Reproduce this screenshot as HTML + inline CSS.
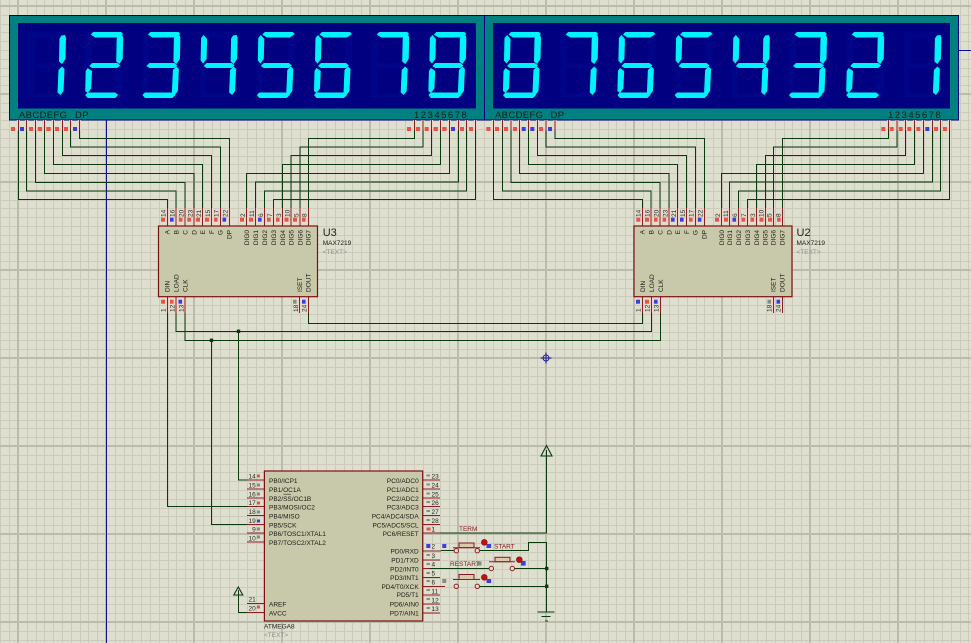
<!DOCTYPE html>
<html><head><meta charset="utf-8">
<style>
html,body{margin:0;padding:0;background:#dfdfd0;width:971px;height:643px;overflow:hidden}
svg{display:block;width:971px;height:643px;overflow:hidden}
text{font-family:"Liberation Sans",sans-serif}
.t{font-size:6.5px;fill:#1c1c16}
.n{font-size:6.5px;fill:#2a2a22}
.l{font-size:9.5px;fill:#0c1c18;letter-spacing:.35px}
.d{font-size:9.5px;fill:#0c1c18;letter-spacing:1.5px}
.g{font-size:6.5px;fill:#8e8e84}
.r{font-size:6.5px;fill:#7a1a1a}
</style></head><body>
<svg width="971" height="643" viewBox="0 0 971 643" xmlns="http://www.w3.org/2000/svg">
<defs>
<path id="cols" d="M9.5 0V643M18.5 0V643M26.5 0V643M35.5 0V643M44.5 0V643M53.5 0V643M62.5 0V643M70.5 0V643M79.5 0V643" stroke="#cbcbbb" stroke-width="1" fill="none"/>
<path id="rows" d="M0 9.5H971M0 18.5H971M0 26.5H971M0 35.5H971M0 44.5H971M0 53.5H971M0 62.5H971M0 70.5H971M0 79.5H971" stroke="#cbcbbb" stroke-width="1" fill="none"/>
<polygon id="a" points="33.5,34.5 36,32 64,32 66,34 61,37.5 38,37.5"/>
<polygon id="b" points="59.5,38.5 61.5,35.5 65,35 66,37.5 65.5,59 62,64 59,61.5"/>
<polygon id="c" points="58.5,70 62,66.5 64.5,69 63.5,91 60.5,95 57.5,92.5"/>
<polygon id="e2" points="28,95 30.5,92.5 58,92.5 61,95 58,98 30.5,98"/>
<polygon id="e" points="28.5,71 30.5,68 34.8,71 34,88.5 30.5,93 28,91"/>
<polygon id="f" points="29.5,38 32,35 35.5,39 35,59 31.5,63.5 29,60.5"/>
<polygon id="m" points="32,66 35,63 60,63 63,65.5 60,68 35,68"/>
<g id="d0"><rect x="28" y="32" width="38" height="66" fill="#000487"/><rect x="35" y="38" width="24" height="25" fill="#000080"/><rect x="34" y="68" width="24" height="25" fill="#000080"/></g>
<g id="d1" fill="#00f4ff"><use href="#b"/><use href="#c"/></g>
<g id="d2" fill="#00f4ff"><use href="#a"/><use href="#b"/><use href="#m"/><use href="#e"/><use href="#e2"/></g>
<g id="d3" fill="#00f4ff"><use href="#a"/><use href="#b"/><use href="#m"/><use href="#c"/><use href="#e2"/></g>
<g id="d4" fill="#00f4ff"><use href="#f"/><use href="#b"/><use href="#m"/><use href="#c"/></g>
<g id="d5" fill="#00f4ff"><use href="#a"/><use href="#f"/><use href="#m"/><use href="#c"/><use href="#e2"/></g>
<g id="d6" fill="#00f4ff"><use href="#a"/><use href="#f"/><use href="#m"/><use href="#c"/><use href="#e"/><use href="#e2"/></g>
<g id="d7" fill="#00f4ff"><use href="#a"/><use href="#b"/><use href="#c"/></g>
<g id="d8" fill="#00f4ff"><use href="#a"/><use href="#b"/><use href="#c"/><use href="#e"/><use href="#e2"/><use href="#f"/><use href="#m"/></g>
</defs>

<rect width="971" height="643" fill="#dfdfd0"/>
<!-- grid -->
<path d="M.5 0V643M9.5 0V643M906.5 0V643M915.5 0V643M924.5 0V643M933.5 0V643M942.5 0V643M951.5 0V643M960.5 0V643M968.5 0V643M0 631.5H971M0 640.5H971" stroke="#cbcbbb" stroke-width="1" fill="none"/>
<use href="#cols" x="18"/><use href="#cols" x="106"/><use href="#cols" x="194"/><use href="#cols" x="282"/><use href="#cols" x="370"/><use href="#cols" x="458"/><use href="#cols" x="546"/><use href="#cols" x="634"/><use href="#cols" x="722"/><use href="#cols" x="810"/>
<use href="#rows" y="6"/><use href="#rows" y="94"/><use href="#rows" y="182"/><use href="#rows" y="270"/><use href="#rows" y="358"/><use href="#rows" y="446"/><use href="#rows" y="534"/>
<path d="M18 0V643M106 0V643M194 0V643M282 0V643M370 0V643M458 0V643M546 0V643M634 0V643M722 0V643M810 0V643M898 0V643M0 6H971M0 94H971M0 182H971M0 270H971M0 358H971M0 446H971M0 534H971M0 622H971" stroke="#bcbcac" stroke-width="2" fill="none"/>

<!-- origin lines -->
<path d="M106.5 120V643M958 50.5H971" stroke="#10108c" stroke-width="1" fill="none"/>
<g stroke="#2020a0" fill="none" stroke-width="1"><circle cx="546" cy="358" r="3"/><path d="M540.5 358H551.5M546 352.5V363.5"/></g>

<!-- displays -->
<rect x="9.5" y="15.5" width="475" height="104.5" fill="#008080" stroke="#000080"/>
<rect x="484.5" y="15.5" width="474" height="104.5" fill="#008080" stroke="#000080"/>
<rect x="18" y="23" width="458" height="85.5" fill="#000080"/>
<rect x="493" y="23" width="457" height="85.5" fill="#000080"/>

<use href="#d0"/><use href="#d0" x="57.2"/><use href="#d0" x="114.4"/><use href="#d0" x="171.6"/><use href="#d0" x="228.8"/><use href="#d0" x="286"/><use href="#d0" x="343.2"/><use href="#d0" x="400.4"/>
<use href="#d0" x="475"/><use href="#d0" x="532.2"/><use href="#d0" x="589.4"/><use href="#d0" x="646.6"/><use href="#d0" x="703.8"/><use href="#d0" x="761"/><use href="#d0" x="818.2"/><use href="#d0" x="875.4"/>

<use href="#d1"/><use href="#d2" x="57.2"/><use href="#d3" x="114.4"/><use href="#d4" x="171.6"/><use href="#d5" x="228.8"/><use href="#d6" x="286"/><use href="#d7" x="343.2"/><use href="#d8" x="400.4"/>
<use href="#d8" x="475"/><use href="#d7" x="532.2"/><use href="#d6" x="589.4"/><use href="#d5" x="646.6"/><use href="#d4" x="703.8"/><use href="#d3" x="761"/><use href="#d2" x="818.2"/><use href="#d1" x="875.4"/>

<text class="l" x="19" y="118">ABCDEFG</text><text class="l" x="75" y="118">DP</text>
<text class="d" x="414" y="118">12345678</text>
<text class="l" x="495" y="118">ABCDEFG</text><text class="l" x="550.5" y="118">DP</text>
<text class="d" x="888" y="118">12345678</text>

<!-- pale pin fringes -->
<g stroke="#eed3c8" stroke-width="3" fill="none">
<path d="M18.3 120V131M26.7 120V131M35.7 120V131M44.7 120V131M53.3 120V131M62.3 120V131M70.7 120V131M79.3 120V131M414.7 120V131M423 120V131M431.7 120V131M440.7 120V131M449.3 120V131M458.3 120V131M466.7 120V131M475.3 120V131"/>
<path d="M493.3 120V131M502.3 120V131M511 120V131M519.7 120V131M528.7 120V131M537.7 120V131M546 120V131M555 120V131M888.7 120V131M897 120V131M905.7 120V131M914.7 120V131M923.3 120V131M932.3 120V131M940.7 120V131M949.3 120V131"/>
<path d="M167.3 208V226M176 208V226M185 208V226M194 208V226M202.7 208V226M211.7 208V226M220.3 208V226M229.3 208V226M246.7 208V226M255.7 208V226M264.7 208V226M273.7 208V226M282.7 208V226M291 208V226M300 208V226M308.3 208V226"/>
<path d="M642.3 208V226M651 208V226M660 208V226M669 208V226M677.7 208V226M686.7 208V226M695.3 208V226M704.3 208V226M721.7 208V226M729.7 208V226M738.7 208V226M747.7 208V226M756.7 208V226M765.3 208V226M773.3 208V226M782.3 208V226"/>
<path d="M167.3 297V313M176 297V313M185 297V313M299.7 297V313M308.3 297V313M642.7 297V313M651.7 297V313M660.7 297V313M773.3 297V313M782.3 297V313"/>
</g>

<!-- pins (dark red) -->
<g stroke="#8c2020" stroke-width="1" fill="none" shape-rendering="crispEdges">
<path d="M18.3 120V130M26.7 120V130M35.7 120V130M44.7 120V130M53.3 120V130M62.3 120V130M70.7 120V130M79.3 120V130M414.7 120V130M423 120V130M431.7 120V130M440.7 120V130M449.3 120V130M458.3 120V130M466.7 120V130M475.3 120V130"/>
<path d="M493.3 120V130M502.3 120V130M511 120V130M519.7 120V130M528.7 120V130M537.7 120V130M546 120V130M555 120V130M888.7 120V130M897 120V130M905.7 120V130M914.7 120V130M923.3 120V130M932.3 120V130M940.7 120V130M949.3 120V130"/>
<path d="M167.3 208V226M176 208V226M185 208V226M194 208V226M202.7 208V226M211.7 208V226M220.3 208V226M229.3 208V226M246.7 208V226M255.7 208V226M264.7 208V226M273.7 208V226M282.7 208V226M291 208V226M300 208V226M308.3 208V226"/>
<path d="M642.3 208V226M651 208V226M660 208V226M669 208V226M677.7 208V226M686.7 208V226M695.3 208V226M704.3 208V226M721.7 208V226M729.7 208V226M738.7 208V226M747.7 208V226M756.7 208V226M765.3 208V226M773.3 208V226M782.3 208V226"/>
<path d="M167.3 297V313M176 297V313M185 297V313M299.7 297V313M308.3 297V313M642.7 297V313M651.7 297V313M660.7 297V313M773.3 297V313M782.3 297V313"/>
<path d="M247 480H264M247 489H264M247 498H264M247 506.7H264M247 515.7H264M247 524.3H264M247 533H264M247 542H264M247 603.3H264M247 612.3H264"/>
<path d="M423 480H440M423 489H440M423 498H440M423 506.7H440M423 515.7H440M423 524.3H440M423 533H440M423 551H441M423 560H440M423 568.5H440M423 577.5H440M423 586.3H445M423 595H440M423 604H440M423 613H440"/>
</g>

<!-- wires -->
<g stroke="#0a3a0c" stroke-width="1" fill="none" shape-rendering="crispEdges">
<path d="M79.3 130V138.3H229.3V208M70.7 130V147H220.3V208M62.3 130V155.3H211.7V208M53.3 130V164.3H202.7V208M44.7 130V173.3H194V208M35.7 130V182.3H185V208M26.7 130V191H176V208M18.3 130V199.3H167.3V208"/>
<path d="M414.7 130V138.3H308.3V208M423 130V147H300V208M431.7 130V155.3H291V208M440.7 130V164.3H282.7V208M449.3 130V173.3H246.7V208M458.3 130V182H255.7V208M466.7 130V191H264.7V208M475.3 130V199.3H273.7V208"/>
<path d="M555 130V138.3H704.3V208M546 130V147H695.3V208M537.7 130V155.3H686.7V208M528.7 130V164.3H677.7V208M519.7 130V173.3H669V208M511 130V182.3H660V208M502.3 130V191H651V208M493.3 130V199.3H642.3V208"/>
<path d="M888.7 130V138.3H782.3V208M897 130V147H773.3V208M905.7 130V155.3H765.3V208M914.7 130V164.3H756.7V208M923.3 130V173.3H721.7V208M932.3 130V182H729.7V208M940.7 130V191H738.7V208M949.3 130V199.3H747.7V208"/>
<path d="M308.3 313V323.3H642.7V313M176 313V331.3H651.7V313M185 313V340.3H660.7V313"/>
<path d="M167.3 313V506.7H247M238.5 331.3V480H247M211.5 340.3V524.3H247"/>
<path d="M238.3 590V612.3H247"/>
<path d="M440 533H546.5V450"/>
<path d="M441 550.7H456M477.3 550.7H528.3V542.3H546.5V612M430 568.5H491.3M512.3 568.5H546.5M477.3 586.3H546.5"/>
<path d="M537.3 612H554.7M541.7 616.5H550.7M545 621H548"/>
</g>
<g stroke="#0a3a0c" stroke-width="1.1" fill="none">
<path d="M546.5 445.5L541 456H552Z"/>
<path d="M238.3 587L233.8 595H242.8Z"/>
</g>
<g fill="#0a3a0c"><rect x="236.8" y="329.6" width="3.4" height="3.4"/><rect x="209.8" y="338.6" width="3.4" height="3.4"/><rect x="545" y="566.8" width="3.4" height="3.4"/><rect x="545" y="584.6" width="3.4" height="3.4"/></g>

<!-- chips -->
<rect x="158.5" y="226" width="159" height="70.7" fill="#c8c8aa" stroke="#7c1010" stroke-width="1.2"/>
<rect x="634" y="226" width="158" height="70.7" fill="#c8c8aa" stroke="#7c1010" stroke-width="1.2"/>
<rect x="264.4" y="471" width="158.3" height="150" fill="#c8c8aa" stroke="#7c1010" stroke-width="1.2"/>

<!-- display pin squares -->
<g fill="#e85548">
<rect x="11" y="127" width="4" height="4"/><rect x="29" y="127" width="4" height="4"/><rect x="37.7" y="127" width="4.4" height="4"/><rect x="46.3" y="127" width="4.4" height="4"/><rect x="55" y="127" width="4" height="4"/><rect x="64" y="127" width="4" height="4"/>
<rect x="407" y="127" width="4" height="4"/><rect x="416" y="127" width="4" height="4"/><rect x="424.7" y="127" width="4" height="4"/><rect x="433.5" y="127" width="4.4" height="4"/><rect x="442.2" y="127" width="4.4" height="4"/><rect x="460" y="127" width="4" height="4"/><rect x="469" y="127" width="4" height="4"/>
<rect x="486.3" y="127" width="4.2" height="4"/><rect x="495" y="127" width="4" height="4"/><rect x="504" y="127" width="4" height="4"/><rect x="513" y="127" width="4" height="4"/><rect x="539" y="127" width="4" height="4"/>
<rect x="881.3" y="127" width="4" height="4"/><rect x="889.7" y="127" width="4" height="4"/><rect x="898.7" y="127" width="4" height="4"/><rect x="907.3" y="127" width="4" height="4"/><rect x="916.3" y="127" width="4" height="4"/><rect x="934" y="127" width="4" height="4"/><rect x="943" y="127" width="4" height="4"/>
<!-- U3 top -->
<rect x="161" y="217.7" width="4" height="4"/><rect x="178.8" y="217.7" width="3.6" height="4"/><rect x="187.3" y="217.7" width="3.6" height="4"/><rect x="196" y="217.7" width="4" height="4"/><rect x="205" y="217.7" width="4" height="4"/><rect x="214" y="217.7" width="3.6" height="4"/>
<rect x="240" y="217.7" width="4" height="4"/><rect x="249" y="217.7" width="4" height="4"/><rect x="267" y="217.7" width="3.6" height="4"/><rect x="276" y="217.7" width="3.6" height="4"/><rect x="284.5" y="217.7" width="4" height="4"/><rect x="293" y="217.7" width="4" height="4"/><rect x="302" y="217.7" width="3.6" height="4"/>
<rect x="161" y="299.7" width="4" height="4"/><rect x="170" y="299.7" width="3.6" height="4"/>
<!-- U2 top -->
<rect x="636.3" y="217.7" width="4" height="4"/><rect x="645" y="217.7" width="4" height="4"/><rect x="654" y="217.7" width="3.6" height="4"/><rect x="662.6" y="217.7" width="3.6" height="4"/><rect x="689" y="217.7" width="3.6" height="4"/>
<rect x="715" y="217.7" width="4" height="4"/><rect x="724" y="217.7" width="4" height="4"/><rect x="741.5" y="217.7" width="3.6" height="4"/><rect x="750.5" y="217.7" width="3.6" height="4"/><rect x="759.5" y="217.7" width="4" height="4"/><rect x="768" y="217.7" width="4" height="4"/><rect x="777" y="217.7" width="3.6" height="4"/>
<rect x="645" y="299.7" width="4" height="4"/>
<!-- AVR -->
<rect x="257" y="474.5" width="3" height="3"/><rect x="257" y="501.5" width="3" height="3"/><rect x="257" y="605.5" width="3" height="3"/><rect x="426.5" y="527.5" width="4" height="3"/>
</g>
<g fill="#3c3ce0">
<rect x="20" y="127" width="4" height="4"/><rect x="73" y="127" width="4" height="4"/><rect x="451" y="127" width="4" height="4"/>
<rect x="521.7" y="127" width="4" height="4"/><rect x="530.3" y="127" width="4" height="4"/><rect x="548" y="127" width="4" height="4"/><rect x="925.3" y="127" width="4" height="4"/>
<rect x="170" y="217.7" width="3.6" height="4"/><rect x="222.5" y="217.7" width="3.6" height="4"/><rect x="258" y="217.7" width="3.6" height="4"/>
<rect x="178.5" y="299.7" width="3.6" height="4"/><rect x="302" y="299.7" width="3.6" height="4"/>
<rect x="671" y="217.7" width="3.6" height="4"/><rect x="680" y="217.7" width="3.6" height="4"/><rect x="697.8" y="217.7" width="3.6" height="4"/><rect x="732.5" y="217.7" width="3.6" height="4"/>
<rect x="636" y="299.7" width="4" height="4"/><rect x="654" y="299.7" width="3.6" height="4"/><rect x="776.5" y="299.7" width="3.6" height="4"/>
<rect x="257" y="519.5" width="3" height="3"/><rect x="426.3" y="544" width="4" height="4"/><rect x="442.3" y="544" width="4" height="4"/>
<rect x="486.5" y="544" width="4.6" height="4"/><rect x="521" y="561" width="4.6" height="4.6"/><rect x="486.5" y="579" width="4.6" height="4"/>
</g>
<g fill="#8a8a80">
<rect x="293" y="299.7" width="3.6" height="4"/><rect x="767.5" y="299.7" width="3.6" height="4"/>
<rect x="257" y="483.5" width="3" height="3"/><rect x="257" y="492.5" width="3" height="3"/><rect x="257" y="510.5" width="3" height="3"/><rect x="257" y="527.5" width="3" height="3"/><rect x="257" y="535.5" width="3" height="3"/>
<rect x="426.5" y="474.5" width="3.4" height="2"/><rect x="426.5" y="483.5" width="3.4" height="2"/><rect x="426.5" y="492.5" width="3.4" height="2"/><rect x="426.5" y="501" width="3.4" height="2"/><rect x="426.5" y="510" width="3.4" height="2"/><rect x="426.5" y="519" width="3.4" height="2"/>
<rect x="426.5" y="554" width="3.4" height="2"/><rect x="426.5" y="563" width="3.4" height="2"/><rect x="426.5" y="572" width="3.4" height="2"/><rect x="426.5" y="580" width="3.4" height="2"/><rect x="426.5" y="589" width="3.4" height="2"/><rect x="426.5" y="598" width="3.4" height="2"/><rect x="426.5" y="607" width="3.4" height="2"/>
<rect x="477.5" y="561.5" width="4" height="4"/><rect x="442.3" y="579" width="4" height="4"/>
</g>

<!-- U3 text -->
<g class="t">
<text class="t" transform="translate(169.6,230) rotate(-90)" text-anchor="end">A</text>
<text class="t" transform="translate(178.3,230) rotate(-90)" text-anchor="end">B</text>
<text class="t" transform="translate(187.3,230) rotate(-90)" text-anchor="end">C</text>
<text class="t" transform="translate(196.3,230) rotate(-90)" text-anchor="end">D</text>
<text class="t" transform="translate(205,230) rotate(-90)" text-anchor="end">E</text>
<text class="t" transform="translate(214,230) rotate(-90)" text-anchor="end">F</text>
<text class="t" transform="translate(222.6,230) rotate(-90)" text-anchor="end">G</text>
<text class="t" transform="translate(231.6,230) rotate(-90)" text-anchor="end">DP</text>
<text class="t" transform="translate(249,230) rotate(-90)" text-anchor="end">DIG0</text>
<text class="t" transform="translate(258,230) rotate(-90)" text-anchor="end">DIG1</text>
<text class="t" transform="translate(267,230) rotate(-90)" text-anchor="end">DIG2</text>
<text class="t" transform="translate(276,230) rotate(-90)" text-anchor="end">DIG3</text>
<text class="t" transform="translate(285,230) rotate(-90)" text-anchor="end">DIG4</text>
<text class="t" transform="translate(293.3,230) rotate(-90)" text-anchor="end">DIG5</text>
<text class="t" transform="translate(302.3,230) rotate(-90)" text-anchor="end">DIG6</text>
<text class="t" transform="translate(310.6,230) rotate(-90)" text-anchor="end">DIG7</text>
<text class="t" transform="translate(169.6,292) rotate(-90)">DIN</text>
<text class="t" transform="translate(178.3,292) rotate(-90)">LOAD</text>
<text class="t" transform="translate(187.3,292) rotate(-90)">CLK</text>
<text class="t" transform="translate(302,292) rotate(-90)">ISET</text>
<text class="t" transform="translate(310.6,292) rotate(-90)">DOUT</text>
<text class="n" transform="translate(165.6,217) rotate(-90)">14</text>
<text class="n" transform="translate(174.3,217) rotate(-90)">16</text>
<text class="n" transform="translate(183.3,217) rotate(-90)">20</text>
<text class="n" transform="translate(192.3,217) rotate(-90)">23</text>
<text class="n" transform="translate(201,217) rotate(-90)">21</text>
<text class="n" transform="translate(210,217) rotate(-90)">15</text>
<text class="n" transform="translate(218.6,217) rotate(-90)">17</text>
<text class="n" transform="translate(227.6,217) rotate(-90)">22</text>
<text class="n" transform="translate(245,217) rotate(-90)">2</text>
<text class="n" transform="translate(254,217) rotate(-90)">11</text>
<text class="n" transform="translate(263,217) rotate(-90)">6</text>
<text class="n" transform="translate(272,217) rotate(-90)">7</text>
<text class="n" transform="translate(281,217) rotate(-90)">3</text>
<text class="n" transform="translate(289.3,217) rotate(-90)">10</text>
<text class="n" transform="translate(298.3,217) rotate(-90)">5</text>
<text class="n" transform="translate(306.6,217) rotate(-90)">8</text>
<text class="n" transform="translate(165.6,312) rotate(-90)">1</text>
<text class="n" transform="translate(174.3,312) rotate(-90)">12</text>
<text class="n" transform="translate(183.3,312) rotate(-90)">13</text>
<text class="n" transform="translate(297.8,312) rotate(-90)">18</text>
<text class="n" transform="translate(306.6,312) rotate(-90)">24</text>
</g>
<text x="322.7" y="236" style="font-size:11px;fill:#22221c">U3</text>
<text class="t" x="322.7" y="245">MAX7219</text>
<text class="g" x="322.7" y="254">&lt;TEXT&gt;</text>

<!-- U2 text -->
<g class="t">
<text class="t" transform="translate(644.6,230) rotate(-90)" text-anchor="end">A</text>
<text class="t" transform="translate(653.3,230) rotate(-90)" text-anchor="end">B</text>
<text class="t" transform="translate(662.3,230) rotate(-90)" text-anchor="end">C</text>
<text class="t" transform="translate(671.3,230) rotate(-90)" text-anchor="end">D</text>
<text class="t" transform="translate(680,230) rotate(-90)" text-anchor="end">E</text>
<text class="t" transform="translate(689,230) rotate(-90)" text-anchor="end">F</text>
<text class="t" transform="translate(697.6,230) rotate(-90)" text-anchor="end">G</text>
<text class="t" transform="translate(706.6,230) rotate(-90)" text-anchor="end">DP</text>
<text class="t" transform="translate(724,230) rotate(-90)" text-anchor="end">DIG0</text>
<text class="t" transform="translate(732,230) rotate(-90)" text-anchor="end">DIG1</text>
<text class="t" transform="translate(741,230) rotate(-90)" text-anchor="end">DIG2</text>
<text class="t" transform="translate(750,230) rotate(-90)" text-anchor="end">DIG3</text>
<text class="t" transform="translate(759,230) rotate(-90)" text-anchor="end">DIG4</text>
<text class="t" transform="translate(767.6,230) rotate(-90)" text-anchor="end">DIG5</text>
<text class="t" transform="translate(775.6,230) rotate(-90)" text-anchor="end">DIG6</text>
<text class="t" transform="translate(784.6,230) rotate(-90)" text-anchor="end">DIG7</text>
<text class="t" transform="translate(645,292) rotate(-90)">DIN</text>
<text class="t" transform="translate(654,292) rotate(-90)">LOAD</text>
<text class="t" transform="translate(663,292) rotate(-90)">CLK</text>
<text class="t" transform="translate(775.6,292) rotate(-90)">ISET</text>
<text class="t" transform="translate(784.6,292) rotate(-90)">DOUT</text>
<text class="n" transform="translate(640.6,217) rotate(-90)">14</text>
<text class="n" transform="translate(649.3,217) rotate(-90)">16</text>
<text class="n" transform="translate(658.3,217) rotate(-90)">20</text>
<text class="n" transform="translate(667.3,217) rotate(-90)">23</text>
<text class="n" transform="translate(676,217) rotate(-90)">21</text>
<text class="n" transform="translate(685,217) rotate(-90)">15</text>
<text class="n" transform="translate(693.6,217) rotate(-90)">17</text>
<text class="n" transform="translate(702.6,217) rotate(-90)">22</text>
<text class="n" transform="translate(720,217) rotate(-90)">2</text>
<text class="n" transform="translate(728,217) rotate(-90)">11</text>
<text class="n" transform="translate(737,217) rotate(-90)">6</text>
<text class="n" transform="translate(746,217) rotate(-90)">7</text>
<text class="n" transform="translate(755,217) rotate(-90)">3</text>
<text class="n" transform="translate(763.6,217) rotate(-90)">10</text>
<text class="n" transform="translate(771.6,217) rotate(-90)">5</text>
<text class="n" transform="translate(780.6,217) rotate(-90)">8</text>
<text class="n" transform="translate(640.6,312) rotate(-90)">1</text>
<text class="n" transform="translate(649.3,312) rotate(-90)">12</text>
<text class="n" transform="translate(658.3,312) rotate(-90)">13</text>
<text class="n" transform="translate(771.6,312) rotate(-90)">18</text>
<text class="n" transform="translate(780.6,312) rotate(-90)">24</text>
</g>
<text x="796.5" y="236" style="font-size:11px;fill:#22221c">U2</text>
<text class="t" x="796.5" y="245">MAX7219</text>
<text class="g" x="796.5" y="254">&lt;TEXT&gt;</text>

<!-- AVR labels -->
<g class="t">
<text class="t" x="269" y="483">PB0/ICP1</text>
<text class="t" x="269" y="492">PB1/OC1A</text>
<text class="t" x="269" y="501">PB2/SS/OC1B</text>
<text class="t" x="269" y="509.7">PB3/MOSI/OC2</text>
<text class="t" x="269" y="518.7">PB4/MISO</text>
<text class="t" x="269" y="527.3">PB5/SCK</text>
<text class="t" x="269" y="536">PB6/TOSC1/XTAL1</text>
<text class="t" x="269" y="545">PB7/TOSC2/XTAL2</text>
<text class="t" x="269" y="606.3">AREF</text>
<text class="t" x="269" y="615.3">AVCC</text>
</g>
<path d="M283.5 494.2H291" stroke="#2a2a22" stroke-width=".6"/>
<g class="t" text-anchor="end">
<text class="t" x="418.7" y="483">PC0/ADC0</text>
<text class="t" x="418.7" y="492">PC1/ADC1</text>
<text class="t" x="418.7" y="501">PC2/ADC2</text>
<text class="t" x="418.7" y="509.7">PC3/ADC3</text>
<text class="t" x="418.7" y="518.7">PC4/ADC4/SDA</text>
<text class="t" x="418.7" y="527.3">PC5/ADC5/SCL</text>
<text class="t" x="418.7" y="536">PC6/RESET</text>
<text class="t" x="418.7" y="553.5">PD0/RXD</text>
<text class="t" x="418.7" y="562.3">PD1/TXD</text>
<text class="t" x="418.7" y="571.3">PD2/INT0</text>
<text class="t" x="418.7" y="580">PD3/INT1</text>
<text class="t" x="418.7" y="589">PD4/T0/XCK</text>
<text class="t" x="418.7" y="597">PD5/T1</text>
<text class="t" x="418.7" y="606.3">PD6/AIN0</text>
<text class="t" x="418.7" y="615.3">PD7/AIN1</text>
</g>
<g class="n">
<text class="n" x="255.7" y="478.7" text-anchor="end">14</text>
<text class="n" x="255.7" y="487.5" text-anchor="end">15</text>
<text class="n" x="255.7" y="496.5" text-anchor="end">16</text>
<text class="n" x="255.7" y="505" text-anchor="end">17</text>
<text class="n" x="255.7" y="514" text-anchor="end">18</text>
<text class="n" x="255.7" y="523" text-anchor="end">19</text>
<text class="n" x="255.7" y="531.7" text-anchor="end">9</text>
<text class="n" x="255.7" y="540.5" text-anchor="end">10</text>
<text class="n" x="255.7" y="601.5" text-anchor="end">21</text>
<text class="n" x="255.7" y="610.5" text-anchor="end">20</text>
<text class="n" x="431.5" y="478.7">23</text>
<text class="n" x="431.5" y="487.5">24</text>
<text class="n" x="431.5" y="496.5">25</text>
<text class="n" x="431.5" y="505">26</text>
<text class="n" x="431.5" y="514">27</text>
<text class="n" x="431.5" y="523">28</text>
<text class="n" x="431.5" y="531.7">1</text>
<text class="n" x="431.5" y="548.5">2</text>
<text class="n" x="431.5" y="558">3</text>
<text class="n" x="431.5" y="566.5">4</text>
<text class="n" x="431.5" y="575.5">5</text>
<text class="n" x="431.5" y="584.5">6</text>
<text class="n" x="431.5" y="593.3">11</text>
<text class="n" x="431.5" y="602.3">12</text>
<text class="n" x="431.5" y="611">13</text>
</g>
<text class="t" x="264" y="628.5">ATMEGA8</text>
<text class="g" x="264" y="637">&lt;TEXT&gt;</text>

<!-- switches -->
<g fill="#dcc8ac" stroke="#7c1c1c" stroke-width="1">
<rect x="459" y="543" width="15" height="4.6"/>
<rect x="495" y="557.3" width="15" height="4.4"/>
<rect x="459" y="574.5" width="15" height="5"/>
</g>
<g stroke="#8c2020" stroke-width="1" fill="none">
<path d="M453 547.7H480M489 561.7H515M453 579.5H480"/>
</g>
<g fill="#dfdfd0" stroke="#8c2020" stroke-width="1">
<circle cx="456.3" cy="550.7" r="2.2"/><circle cx="477.3" cy="550.7" r="2.2"/>
<circle cx="491.3" cy="568.5" r="2.2"/><circle cx="512.3" cy="568.5" r="2.2"/>
<circle cx="456.3" cy="586.3" r="2.2"/><circle cx="477.3" cy="586.3" r="2.2"/>
</g>
<g fill="#c01010" stroke="#801010" stroke-width=".6">
<circle cx="484.3" cy="542.3" r="2.9"/><circle cx="519.3" cy="559.7" r="2.9"/><circle cx="484.3" cy="577.3" r="2.9"/>
</g>
<text class="r" x="459" y="531">TERM</text>
<text class="r" x="494" y="548.5">START</text>
<text class="r" x="450" y="566">RESTART</text>
</svg>
</body></html>
